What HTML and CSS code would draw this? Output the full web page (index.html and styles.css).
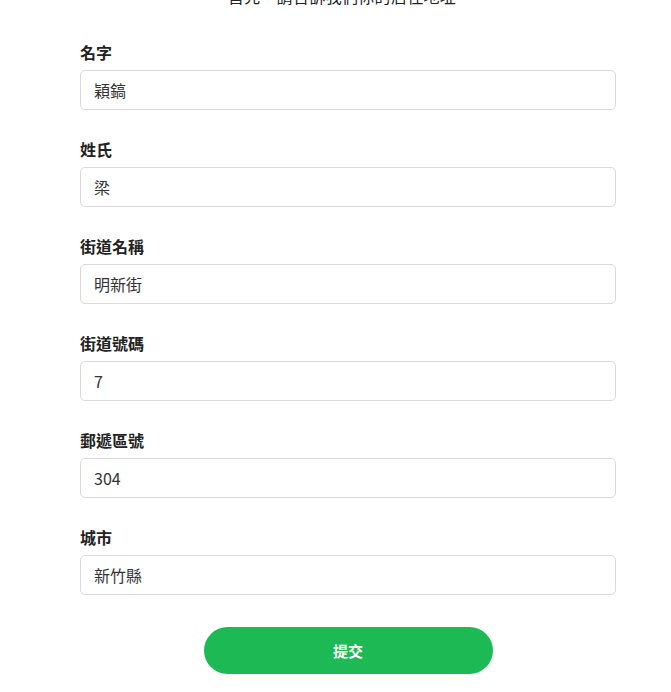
FILE: index.html
```html
<!DOCTYPE html>
<html lang="zh-Hant">
<head>
<meta charset="utf-8">
<link rel="stylesheet" href="styles.css">
</head>
<body>
<main class="page">
  <h2 class="intro">首先，請告訴我們你的居住地址</h2>
  <form class="form">
    <div class="field">
      <label class="label">名字</label>
      <input class="input" type="text" value="穎鎬">
    </div>
    <div class="field">
      <label class="label">姓氏</label>
      <input class="input" type="text" value="梁">
    </div>
    <div class="field">
      <label class="label">街道名稱</label>
      <input class="input" type="text" value="明新街">
    </div>
    <div class="field">
      <label class="label">街道號碼</label>
      <input class="input" type="text" value="7">
    </div>
    <div class="field">
      <label class="label">郵遞區號</label>
      <input class="input" type="text" value="304">
    </div>
    <div class="field">
      <label class="label">城市</label>
      <input class="input" type="text" value="新竹縣">
    </div>
    <div class="actions">
      <button class="submit" type="button">提交</button>
    </div>
  </form>
</main>
</body>
</html>
```
FILE: styles.css
```css
* { box-sizing: border-box; }
html, body { margin: 0; padding: 0; background: #fff; }
body {
  font-family: "Noto Sans CJK TC", "Noto Sans", sans-serif;
  color: #222;
  overflow: hidden;
}
.page {
  padding-left: 80px;
  width: 616px;
}
.intro {
  margin: -16px 0 0 0;
  font-size: 16px;
  line-height: 24px;
  font-weight: 400;
  text-align: center;
  padding-right: 12px;
  letter-spacing: 0.3px;
  color: #222;
}
.form {
  margin-top: 32px;
  display: flex;
  flex-direction: column;
  gap: 27px;
}
.field {
  display: flex;
  flex-direction: column;
  gap: 6px;
}
.label {
  font-size: 16px;
  line-height: 24px;
  font-weight: 700;
  color: #222;
}
.input {
  height: 40px;
  width: 100%;
  border: 1px solid #d9d9d9;
  border-radius: 5px;
  padding: 0 13px;
  font-family: "Noto Sans CJK TC", "Noto Sans", sans-serif;
  font-size: 16px;
  color: #333;
  background: #fff;
  outline: none;
}
.actions {
  display: flex;
  justify-content: center;
  margin-top: 5px;
}
.submit {
  width: 289px;
  height: 47px;
  border: none;
  border-radius: 24px;
  background: #1db954;
  color: #fff;
  font-family: "Noto Sans CJK TC", "Noto Sans", sans-serif;
  font-size: 15px;
  font-weight: 700;
  cursor: pointer;
}
```
